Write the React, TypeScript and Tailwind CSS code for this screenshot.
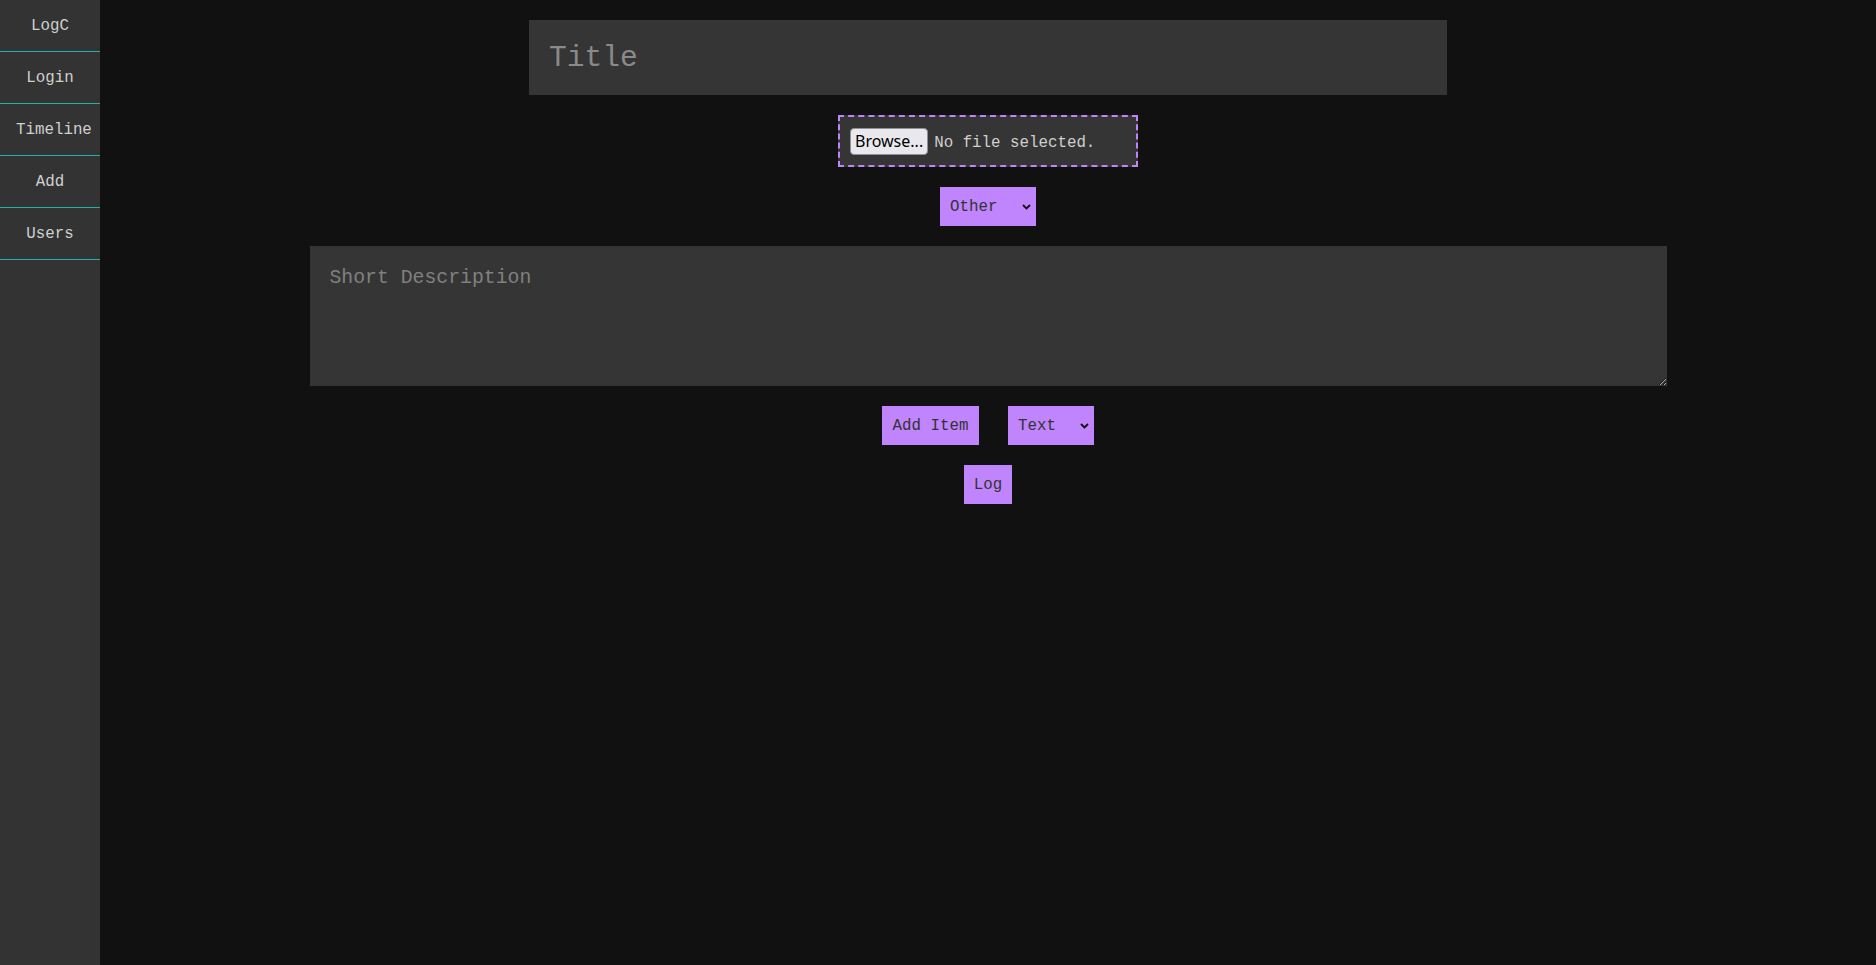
import React from "react";

const navItems = ["LogC", "Login", "Timeline", "Add", "Users"];

const Chevron = () => (
  <svg
    className="pointer-events-none absolute right-[5px] top-1/2 -translate-y-1/2"
    width="9"
    height="6"
    viewBox="0 0 9 6"
    fill="none"
  >
    <path d="M1 1l3.5 3.5L8 1" stroke="#111" strokeWidth="1.8" />
  </svg>
);

const PurpleSelect = ({ value, options, width }: { value: string; options: string[]; width: string }) => (
  <div className={`relative ${width} h-[39px]`}>
    <select
      defaultValue={value}
      className="appearance-none w-full h-full bg-[#c084fc] text-[#333] pl-[10px] pr-6 pt-[2px] text-[15.8px] font-['Liberation_Mono',monospace] outline-none border-0 rounded-none"
    >
      {options.map((o) => (
        <option key={o}>{o}</option>
      ))}
    </select>
    <Chevron />
  </div>
);

export default function App() {
  return (
    <div className="flex h-screen w-full bg-[#111] font-['Liberation_Mono',monospace]">
      <nav className="w-[100px] shrink-0 h-full bg-[#333]">
        {navItems.map((item) => (
          <a
            key={item}
            href="#"
            className="block px-4 pt-[17px] pb-[15px] text-center text-[15.8px] leading-[19px] text-[#d0d0d0] border-b border-[#20b2aa] whitespace-nowrap"
          >
            {item}
          </a>
        ))}
      </nav>

      <main className="flex-1 flex flex-col items-center pt-5 gap-5">
        <input
          type="text"
          placeholder="Title"
          className="w-[918px] h-[75px] shrink-0 bg-[#353535] px-5 text-[29.6px] text-[#ccc] placeholder:text-[#8a8a8a] outline-none font-['Liberation_Mono',monospace]"
        />

        <label className="w-[300px] h-[52px] flex items-center px-[10px] border-2 border-dashed border-[#c084fc] bg-[#353535] cursor-pointer">
          <span className="h-[27px] px-[4px] flex items-center rounded-[4px] border border-[#8f8f9d] bg-[#e9e9ed] text-black text-[16px] font-['Noto_Sans',sans-serif]">
            Browse...
          </span>
          <span className="ml-[6px] mt-[5px] text-[15.8px] text-[#cfcfcf]">No file selected.</span>
        </label>

        <PurpleSelect value="Other" options={["Other", "Work", "Personal"]} width="w-[96px]" />

        <textarea
          placeholder="Short Description"
          className="w-[1357px] h-[140px] shrink-0 bg-[#353535] px-5 pt-[18px] pb-5 text-[19.8px] text-[#ccc] placeholder:text-[#808080] outline-none font-['Liberation_Mono',monospace]"
        />

        <div className="flex items-center gap-[29px]">
          <button className="h-[39px] w-[97px] pt-[2px] bg-[#c084fc] text-[#333] text-[15.8px] font-['Liberation_Mono',monospace]">
            Add Item
          </button>
          <PurpleSelect value="Text" options={["Text", "Image", "Code"]} width="w-[86px]" />
        </div>

        <button className="h-[39px] w-[48px] pt-[2px] bg-[#c084fc] text-[#333] text-[15.8px] font-['Liberation_Mono',monospace]">
          Log
        </button>
      </main>
    </div>
  );
}
